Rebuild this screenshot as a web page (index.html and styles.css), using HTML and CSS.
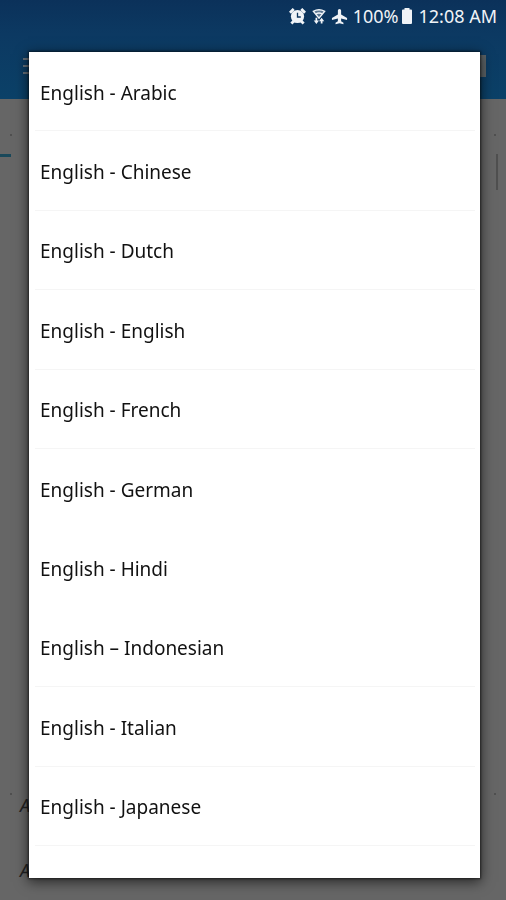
FILE: index.html
```html
<!DOCTYPE html>
<html lang="en">
<head>
<meta charset="utf-8">
<meta name="viewport" content="width=device-width">
<title>Dictionary</title>
<link rel="stylesheet" href="styles.css">
</head>
<body>
<div class="screen">
  <header class="top">
    <div class="status">
      <svg class="icon alarm" viewBox="0 0 18 18" aria-hidden="true"><circle cx="9" cy="9" r="7" fill="currentColor"/><path d="M1 5 5 1M13 1 17 5M2.500 16.500l3-3M15.500 16.500l-3-3" stroke="currentColor" stroke-width="3"/><path d="M9 5V9.500H12.500" fill="none" stroke="#0c355d" stroke-width="1.400"/></svg>
      <svg class="icon wifi" viewBox="0 0 16 18" aria-hidden="true"><path d="M1.500 3Q8-.5 14.500 3L8 11z" fill="currentColor" fill-opacity=".35" stroke="currentColor" stroke-width="1.600"/><path d="M4.500 6Q8 4 11.500 6" fill="none" stroke="currentColor" stroke-width="1.500"/><path d="M5 10.500v4M11 17v-4" stroke="currentColor" stroke-width="2"/><path d="M2 13.500h6L5 17.500zM8 14.500h6L11 10.500z" fill="currentColor"/></svg>
      <svg class="icon" viewBox="0 0 18 18" aria-hidden="true"><path d="M9 1c1 0 1.700.8 1.700 2v4L17 10.500v2.200l-6.300-1.700v3l2.500 1.700V17.200L9 16.200 4.800 17.200v-1.500l2.500-1.700v-3L1 12.700v-2.200L7.300 7V3C7.300 1.800 8 1 9 1z" fill="currentColor"/></svg>
      <span>100%</span>
      <svg class="battery" viewBox="0 0 10 16" aria-hidden="true"><path d="M2.500 0h5v1.500H9q1 0 1 1V15q0 1-1 1H1q-1 0-1-1V2.500q0-1 1-1h1.500z" fill="currentColor"/></svg>
      <time>12:08 AM</time>
    </div>
    <div class="bar">
      <button class="menu" aria-label="Menu"><i></i><i></i><i></i></button>
      <i class="action"></i>
    </div>
  </header>
  <main class="page">
    <div class="tabs"><i class="dot"></i><i class="dot"></i></div>
    <div class="tabline"></div>
    <div class="thumb"></div>
    <div class="words">
      <div class="dots"><i class="dot"></i><i class="dot"></i></div>
      <p>A</p>
      <p>A</p>
    </div>
  </main>
</div>
<div class="dialog" role="dialog" aria-label="Choose a dictionary">
  <ul class="list">
    <li><button>English - Arabic</button></li>
    <li><button>English - Chinese</button></li>
    <li><button>English - Dutch</button></li>
    <li><button>English - English</button></li>
    <li><button>English - French</button></li>
    <li class="plain"><button>English - German</button></li>
    <li class="plain"><button>English - Hindi</button></li>
    <li><button>English – Indonesian</button></li>
    <li><button>English - Italian</button></li>
    <li><button>English - Japanese</button></li>
  </ul>
</div>
</body>
</html>
```
FILE: styles.css
```css
* { box-sizing: border-box; }
body {
  margin: 0;
  font-family: "Noto Sans", "Open Sans", sans-serif;
  background: #666;
  color: #111;
}
button { font: inherit; color: inherit; border: 0; background: none; padding: 0; }
.screen { display: flex; flex-direction: column; min-height: 100vh; }
.top { background: linear-gradient(#0b315a, #0c3962 34px, #0b4168 99px); }
.status {
  display: flex;
  align-items: center;
  justify-content: flex-end;
  height: 32px;
  padding-right: 9px;
  color: #f0f3f7;
  font-size: 18px;
  line-height: 32px;
}
.icon { width: 17px; height: 17px; margin-right: 5px; }
.wifi { width: 14px; }
.alarm { margin-right: 6px; }
.battery { width: 10px; height: 16px; margin: 0 6px 0 4px; }
.bar {
  display: flex;
  align-items: center;
  justify-content: space-between;
  height: 67px;
  padding: 0 20px 0 23px;
}
.menu { display: grid; gap: 5px; width: 22px; }
.menu i { height: 2px; background: #66717b; }
.action { width: 20px; height: 22px; background: #5d6467; }
.page { flex: 1; display: flex; flex-direction: column; }
.tabs, .dots { display: flex; justify-content: space-between; padding: 0 10px; }
.tabs { height: 55px; align-items: center; padding-top: 16px; }
.dot { width: 2px; height: 2px; background: #505050; }
.tabline { width: 11px; height: 3px; background: #19485a; }
.thumb { width: 2px; height: 36px; margin: -3px 8px 0 auto; background: #505050; }
.words { margin-top: auto; padding-bottom: 16px; font-size: 18px; }
.words p { margin: 0; padding-left: 20px; height: 65px; line-height: 20px; font-style: italic; color: #222; }
.words p:last-child { height: 24px; }
.dialog {
  position: fixed;
  inset: 52px 26px 22px 29px;
  display: flex;
  padding-bottom: 32px;
  background: #fff;
  box-shadow: 0 0 2px 1px rgba(0, 0, 0, .5), 0 3px 12px 1px rgba(0, 0, 0, .6);
}
.list {
  flex: 1;
  display: grid;
  grid-auto-rows: 1fr;
  margin: 0;
  padding: 0 5px 0 6px;
  list-style: none;
}
.list li { display: flex; border-bottom: 1px solid #f5f5f5; }
.list .plain { border-color: transparent; }
.list button { flex: 1; padding: 3px 0 0 5px; text-align: left; font-size: 19px; }
```
